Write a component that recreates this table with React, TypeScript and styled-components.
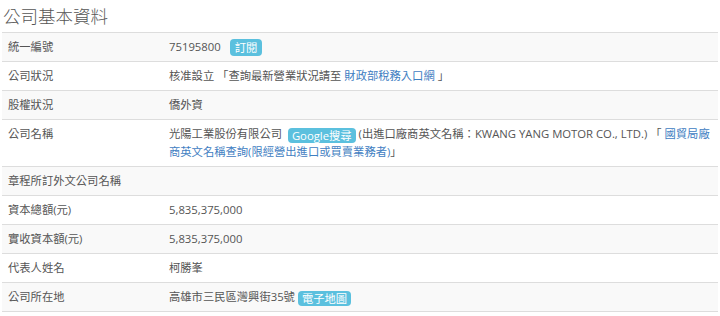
import * as React from "react";
import styled, { createGlobalStyle } from "styled-components";

const GlobalStyle = createGlobalStyle`
  body {
    margin: 0;
    background: #fff;
    font-family: "Open Sans", "Noto Sans CJK TC", sans-serif;
    color: #555;
  }
`;

const Panel = styled.section`
  padding: 0 2px;
`;

const Title = styled.h3`
  margin: 0;
  padding-left: 1px;
  font-size: 17.5px;
  font-weight: 300;
  line-height: 32px;
  color: #555;
`;

const Table = styled.table`
  width: 100%;
  border-collapse: collapse;
  table-layout: fixed;
  font-size: 11.3px;
  line-height: 18px;
  border-bottom: 1px solid #ddd;
`;

const Row = styled.tr<{ $striped: boolean }>`
  background: ${(p) => (p.$striped ? "#f9f9f9" : "#fff")};
`;

const Label = styled.td`
  width: 149px;
  padding: 5px 6px;
  border-top: 1px solid #ddd;
  vertical-align: top;
`;

const Value = styled.td`
  padding: 5px 6px;
  border-top: 1px solid #ddd;
  vertical-align: top;
`;

const Badge = styled.span<{ $big?: boolean }>`
  display: inline-block;
  background: #5bc0de;
  color: #fff;
  border-radius: 4px;
  font-size: 11.3px;
  line-height: ${(p) => (p.$big ? "17px" : "15px")};
  padding: ${(p) => (p.$big ? "0 5px" : "0 4px")};
  margin-left: ${(p) => (p.$big ? "9px" : "3px")};
  vertical-align: middle;
`;

const Link = styled.a`
  color: #3f80c2;
  text-decoration: none;
`;

type Item = { label: string; value: React.ReactNode };

const items: Item[] = [
  {
    label: "統一編號",
    value: (
      <>
        75195800<Badge $big>訂閱</Badge>
      </>
    ),
  },
  {
    label: "公司狀況",
    value: (
      <>
        核准設立 「查詢最新營業狀況請至 <Link href="#">財政部稅務入口網</Link> 」
      </>
    ),
  },
  { label: "股權狀況", value: "僑外資" },
  {
    label: "公司名稱",
    value: (
      <>
        光陽工業股份有限公司 <Badge>Google搜尋</Badge> (出進口廠商英文名稱：KWANG YANG MOTOR CO., LTD.) 「{" "}
        <Link href="#">國貿局廠商英文名稱查詢(限經營出進口或買賣業務者)</Link>」
      </>
    ),
  },
  { label: "章程所訂外文公司名稱", value: "" },
  { label: "資本總額(元)", value: "5,835,375,000" },
  { label: "實收資本額(元)", value: "5,835,375,000" },
  { label: "代表人姓名", value: "柯勝峯" },
  {
    label: "公司所在地",
    value: (
      <>
        高雄市三民區灣興街35號<Badge>電子地圖</Badge>
      </>
    ),
  },
];

const App = () => {
  return (
    <Panel>
      <GlobalStyle />
      <Title>公司基本資料</Title>
      <Table>
        <tbody>
          {items.map((item, index) => (
            <Row key={item.label} $striped={index % 2 === 0}>
              <Label>{item.label}</Label>
              <Value>{item.value}</Value>
            </Row>
          ))}
        </tbody>
      </Table>
    </Panel>
  );
};

export default App;
